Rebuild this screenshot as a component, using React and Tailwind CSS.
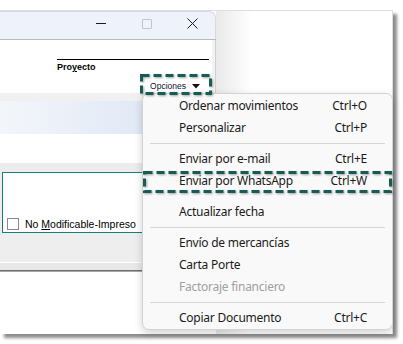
const menuFont = { fontFamily: '"Segoe UI", "Noto Sans", sans-serif' };

const items = [
    { label: 'Ordenar movimientos', key: 'Ctrl+O' },
    { label: 'Personalizar', key: 'Ctrl+P' },
    { sep: true },
    { label: 'Enviar por e-mail', key: 'Ctrl+E' },
    { label: 'Enviar por WhatsApp', key: 'Ctrl+W' },
    { gap: true },
    { label: 'Actualizar fecha' },
    { sep: true },
    { label: 'Envío de mercancías' },
    { label: 'Carta Porte' },
    { label: 'Factoraje financiero', disabled: true },
    { sep: true },
    { label: 'Copiar Documento', key: 'Ctrl+C' },
];

const DashedBox = ({ left, top, width, height }) => (
    <svg
        className="absolute drop-shadow-[1px_1px_1px_rgba(0,0,0,0.35)]"
        style={{ left, top }}
        width={width}
        height={height}
    >
        <rect
            x="1.5"
            y="1.5"
            width={width - 3}
            height={height - 3}
            fill="none"
            stroke="#155c55"
            strokeWidth="3"
            strokeDasharray="8 4"
        />
    </svg>
);

const App = () => {
    return (
        <div className="relative w-[403px] h-[344px] bg-white overflow-hidden font-['Liberation_Sans',Arial,sans-serif]">
            <div className="pt-[10px]">
                {/* Screenshot frame */}
                <div className="flex w-[393px] h-[324px] bg-white border-r border-t border-[#dedede] shadow-[4px_4px_3px_rgba(0,0,0,0.45)]">
                    {/* Window */}
                    <div className="flex flex-col w-[216px] shrink-0">
                        {/* Title bar */}
                        <div className="flex justify-end h-[28px] bg-[#eef2fa] rounded-tr-[7px] border-r border-t border-[#d8d8d8]">
                            <div className="flex items-center justify-center w-[46px] pb-[4px]">
                                <div className="w-[10px] h-px bg-[#1c1c1c]" />
                            </div>
                            <div className="flex items-center justify-center w-[46px] pb-[4px]">
                                <div className="w-[10px] h-[10px] border border-[#c4c4c4] rounded-[1px]" />
                            </div>
                            <div className="flex items-center justify-center w-[45px] pb-[4px]">
                                <svg width="11" height="11" viewBox="0 0 11 11">
                                    <path d="M0.5 0.5 L10.5 10.5 M10.5 0.5 L0.5 10.5" stroke="#1c1c1c" strokeWidth="1" />
                                </svg>
                            </div>
                        </div>
                        <div className="h-px bg-[#b9b9b9]" />

                        {/* Content */}
                        <div className="flex h-[53px] bg-[#f3f3f3] border-r border-[#cfcfcf]">
                            <div className="flex flex-col w-[212px] bg-white">
                                <div className="ml-[57px] mt-[19px] w-[152px] h-px bg-black" />
                                <div className="ml-[57px] mt-[2px] text-[9px] leading-[11px] font-bold text-black">
                                    Pro<span className="underline">y</span>ecto
                                </div>
                                <div className="flex justify-end items-center gap-[6px] mt-[8px] pr-[12px] text-[8.5px] leading-[10px] text-[#101030]">
                                    <span>Opciones</span>
                                    <svg width="8" height="5" viewBox="0 0 8 5">
                                        <path d="M0 0 H8 L4 4.5 Z" fill="#111" />
                                    </svg>
                                </div>
                            </div>
                        </div>

                        <div className="h-[8px] bg-[#f0f0f0]" />
                        <div className="h-[33px] bg-gradient-to-r from-[#f3f6fb] to-[#d8e2f3]" />
                        <div className="h-[29px] bg-white" />
                        <div className="h-[8px] bg-[#ececec]" />
                        <div className="h-[62px] bg-[#eeeeee] pl-[2px] pt-px">
                            <div className="relative h-[61px] bg-white border border-[#13807a]">
                                <div className="absolute left-[4px] bottom-[2px] flex items-center gap-[6px]">
                                    <div className="w-[12px] h-[12px] border border-[#8a8a8a] bg-white" />
                                    <span className="text-[10.5px] leading-[12px] text-black whitespace-nowrap">
                                        No <span className="underline">M</span>odificable-Impreso
                                    </span>
                                </div>
                            </div>
                        </div>
                        <div className="h-[29px] bg-[#eeeeee]" />
                        <div className="h-px bg-white" />
                        <div className="h-[7px] bg-[#e8e8e8]" />
                        <div className="h-px bg-[#6f6f6f]" />
                        <div className="h-px bg-[#a8a8a8]" />
                        <div className="flex-1 bg-white" />
                    </div>

                    {/* Area beside the window */}
                    <div className="flex-1 bg-gradient-to-r from-[#e9e9e9] via-white via-20% to-white" />
                </div>
            </div>

            {/* Opciones menu */}
            <div
                className="absolute left-[142px] top-[93px] w-[251px] h-[237px] pt-px bg-[#f9f9f9] border border-[#d3d3d3] rounded-[7px] shadow-[0_3px_8px_rgba(0,0,0,0.18)]"
                style={menuFont}
            >
                {items.map((it, i) => {
                    if (it.sep) {
                        return (
                            <div key={i} className="flex items-center h-[9px] px-[7px]">
                                <div className="flex-1 h-px bg-[#d6d6d6]" />
                            </div>
                        );
                    }
                    if (it.gap) return <div key={i} className="h-[9px]" />;
                    return (
                        <div
                            key={i}
                            className={`flex items-center justify-between h-[22px] pl-[36px] pr-[25px] text-[12px] tracking-[-0.25px] ${it.disabled ? 'text-[#a0a0a0]' : 'text-[#1a1a1a]'}`}
                        >
                            <span>{it.label}</span>
                            {it.key && <span>{it.key}</span>}
                        </div>
                    );
                })}
            </div>

            {/* Annotation boxes */}
            <DashedBox left={140} top={74} width={72} height={21} />
            <DashedBox left={143} top={171} width={249} height={22} />
        </div>
    );
};

export default App;
